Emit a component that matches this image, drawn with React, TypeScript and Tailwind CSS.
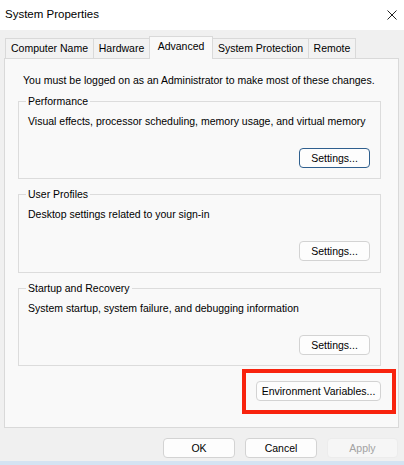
const tabs = [
  { label: "Computer Name", width: "w-[89px]" },
  { label: "Hardware", width: "w-[57px]" },
  { label: "Advanced", width: "w-[64px]", active: true },
  { label: "System Protection", width: "w-[97px]" },
  { label: "Remote", width: "w-[48px]" },
];

const groups = [
  {
    title: "Performance",
    description: "Visual effects, processor scheduling, memory usage, and virtual memory",
    height: "h-[78px]",
    focused: true,
  },
  {
    title: "User Profiles",
    description: "Desktop settings related to your sign-in",
    height: "h-[79px]",
  },
  {
    title: "Startup and Recovery",
    description: "System startup, system failure, and debugging information",
    height: "h-[78px]",
  },
];

function WinButton({
  children,
  className = "",
  focused = false,
  disabled = false,
}: {
  children: React.ReactNode;
  className?: string;
  focused?: boolean;
  disabled?: boolean;
}) {
  const tone = disabled
    ? "border-[#ececec] bg-[#f6f6f6] text-[#a2a2a2]"
    : focused
      ? "border-[#2f5f8e] bg-[#fdfdfd] text-black"
      : "border-[#d3d3d3] bg-[#fdfdfd] text-black";
  return (
    <div
      className={`flex h-[20px] items-center justify-center rounded-[4px] border leading-none ${tone} ${className}`}
    >
      {children}
    </div>
  );
}

export default function App() {
  return (
    <div className="flex h-[465px] w-[404px] flex-col overflow-hidden bg-[#f0f0f0] font-['Liberation_Sans',Arial,sans-serif] text-[10.5px] text-black">
      {/* title bar */}
      <div className="flex h-[30px] shrink-0 items-center justify-between bg-white pl-[5px] pr-[7px]">
        <span className="text-[11.5px]">System Properties</span>
        <svg width="10" height="10" viewBox="0 0 10 10" className="mr-[0px]">
          <path d="M0.5 0.5 L9.5 9.5 M9.5 0.5 L0.5 9.5" stroke="#222" strokeWidth="1" />
        </svg>
      </div>

      {/* tab strip */}
      <div className="flex h-[28px] shrink-0 items-end pl-[5px]">
        {tabs.map((tab, i) => (
          <div
            key={tab.label}
            className={`flex items-center justify-center border border-b-0 border-[#d9d9d9] ${tab.width} ${
              i > 0 ? "-ml-px" : ""
            } ${
              tab.active
                ? "relative z-10 -mb-px h-[23px] bg-[#f9f9f9] pb-[3px]"
                : "h-[20px] bg-[#f2f2f2]"
            }`}
          >
            {tab.label}
          </div>
        ))}
      </div>

      {/* tab panel */}
      <div className="ml-[4px] flex h-[370px] w-[395px] shrink-0 flex-col border border-[#d9d9d9] bg-[#f9f9f9] pl-[13px] pt-[14px]">
        <p className="ml-[5px] leading-[14px]">
          You must be logged on as an Administrator to make most of these changes.
        </p>

        <div className="mt-[14px] flex flex-col gap-[15px]">
          {groups.map((group) => (
            <div
              key={group.title}
              className={`relative w-[363px] border border-[#dcdcdc] pl-[9px] pr-[10px] pt-[12px] ${group.height}`}
            >
              <span className="absolute -top-[8px] left-[7px] bg-[#f9f9f9] px-[2px] leading-[14px]">
                {group.title}
              </span>
              <p className="leading-[14px]">{group.description}</p>
              <div className="mt-[20px] flex justify-end">
                <WinButton className="w-[71px]" focused={group.focused}>
                  Settings...
                </WinButton>
              </div>
            </div>
          ))}
        </div>

        <div className="mt-[15px] flex w-[363px] justify-end">
          <div className="relative">
            <WinButton className="w-[125px]">Environment Variables...</WinButton>
            <div className="pointer-events-none absolute -bottom-[13px] -left-[14px] -right-[15px] -top-[12px] border-[4px] border-[#f8230e]" />
          </div>
        </div>
      </div>

      {/* dialog buttons */}
      <div className="mt-[10px] flex shrink-0 justify-end gap-[10px] pr-[6px]">
        <WinButton className="w-[72px]">OK</WinButton>
        <WinButton className="w-[72px]">Cancel</WinButton>
        <WinButton className="w-[71px]" disabled>
          Apply
        </WinButton>
      </div>

      <div className="mt-auto h-[4px] shrink-0 bg-[#d4e3f2]" />
    </div>
  );
}
